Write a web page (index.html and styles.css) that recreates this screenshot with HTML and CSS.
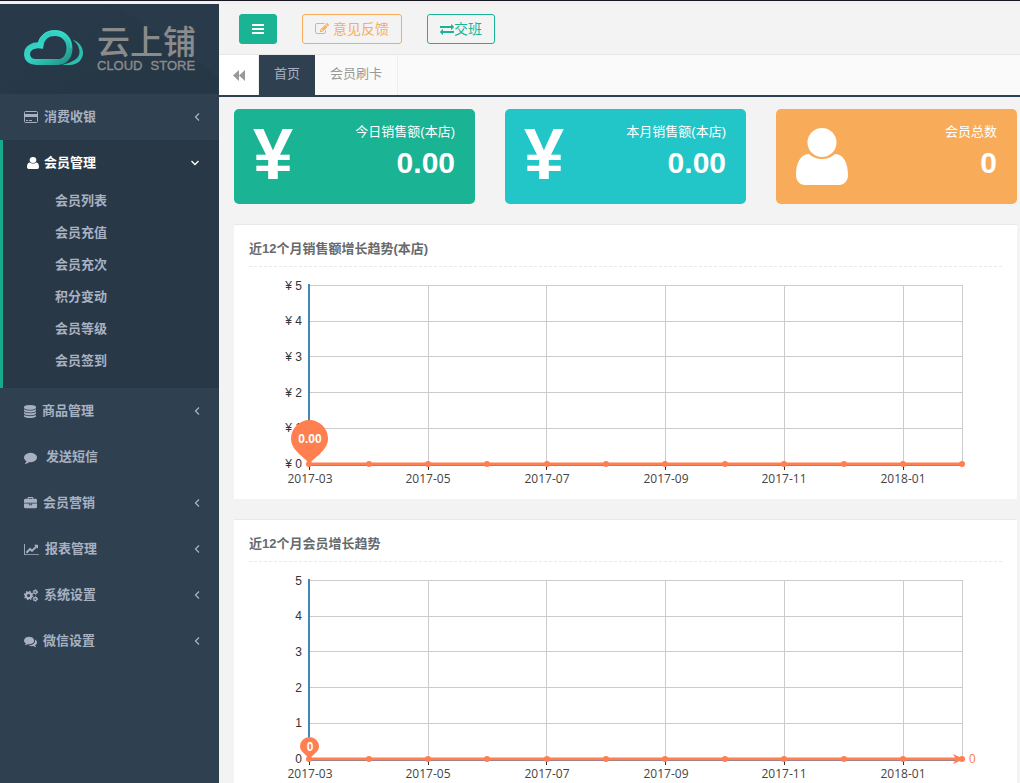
FILE: index.html
```html
<!DOCTYPE html>
<html lang="zh-CN">
<head>
<meta charset="utf-8">
<title>云上铺</title>
<link rel="stylesheet" href="styles.css">
</head>
<body>
<div class="app">
  <aside class="sidebar">
    <a class="brand" href="#">
      <svg class="brand-mark" width="60" height="36" viewBox="0 0 60 36" aria-hidden="true">
        <defs>
          <linearGradient id="cloud" x1="0" y1="0" x2="1" y2="1">
            <stop offset="0" stop-color="#2bc4b4"/><stop offset=".45" stop-color="#35d6c6"/><stop offset="1" stop-color="#1f9488"/>
          </linearGradient>
        </defs>
        <path d="M48 9.500C55 11.500 59 17 59 23C59 30 53 35 46 35H38C50 32 56 28 55.500 21C55 16 52 12 48 9.500Z" fill="#2abfb0"/>
        <path d="M12 32H34C42 32 45.500 25 45.500 18C45.500 9 39 3 31 3C23 3 17.500 8 16.500 15.500C9 14.500 3 18.500 3 24C3 29 7 32 12 32Z" fill="none" stroke="url(#cloud)" stroke-width="6"/>
        <path d="M14 15C15 6 22 1 30 1C41 1 47 9 47 18" fill="none" stroke="#3adccb" stroke-width="1"/>
      </svg>
      <span class="brand-name">
        <span class="brand-cn">云上铺</span>
        <span class="brand-en"><span>CLOUD</span><span>STORE</span></span>
      </span>
    </a>
    <nav>
      <ul class="menu">
        <li><a class="menu-link" href="#">
          <svg width="14" height="12" viewBox="0 0 14 12"><rect x=".5" y=".5" width="13" height="11" rx="1" fill="none" stroke="currentColor"/><path d="M1 3h12v3H1zM2 9h2v1H2zM5 9h3v1H5z"/></svg>
          <span>消费收银</span><svg class="arrow" width="6" height="8" viewBox="0 0 6 8"><path d="M5 .5L1.500 4L5 7.500"/></svg></a></li>
        <li class="open"><a class="menu-link" href="#">
          <svg width="12" height="12" viewBox="0 0 52 57" preserveAspectRatio="none"><circle cx="26" cy="14.500" r="14.500"/><path d="M13 26C16 29 21 31 26 31S36 29 39 26C48 26 52 36 52 47C52 53 48 57 43 57H9C4 57 0 53 0 47C0 36 4 26 13 26Z"/></svg>
          <span>会员管理</span><svg class="arrow" width="8" height="6" viewBox="0 0 8 6"><path d="M.5 1L4 4.500L7.500 1"/></svg></a>
          <ul class="submenu">
            <li><a href="#">会员列表</a></li>
            <li><a href="#">会员充值</a></li>
            <li><a href="#">会员充次</a></li>
            <li><a href="#">积分变动</a></li>
            <li><a href="#">会员等级</a></li>
            <li><a href="#">会员签到</a></li>
          </ul></li>
        <li><a class="menu-link" href="#">
          <svg width="12" height="13" viewBox="128 0 1536 1792" preserveAspectRatio="none"><path d="M896 768q237 0 443-43t325-127v170q0 69-103 128t-280 93.500-385 34.500-385-34.500-280-93.500-103-128v-170q119 84 325 127t443 43zm0 768q237 0 443-43t325-127v170q0 69-103 128t-280 93.500-385 34.500-385-34.500-280-93.500-103-128v-170q119 84 325 127t443 43zm0-384q237 0 443-43t325-127v170q0 69-103 128t-280 93.500-385 34.500-385-34.500-280-93.500-103-128v-170q119 84 325 127t443 43zm0-1152q208 0 385 34.500t280 93.500 103 128v128q0 69-103 128t-280 93.500-385 34.500-385-34.500-280-93.500-103-128v-128q0-69 103-128t280-93.500 385-34.500z"/></svg>
          <span>商品管理</span><svg class="arrow" width="6" height="8" viewBox="0 0 6 8"><path d="M5 .5L1.500 4L5 7.500"/></svg></a></li>
        <li><a class="menu-link wide" href="#">
          <svg width="13" height="13" viewBox="0 0 1792 1792"><path d="M1792 896q0 174-120 321.500t-326 233-450 85.500q-70 0-145-8-198 175-460 242-49 14-114 22-17 2-30.500-9t-17.500-29v-1q-3-4-.5-12t2-10 4.500-9.500l6-9 7-8.500 8-9q7-8 31-34.500t34.500-38 31-39.500 32.500-51 27-59 26-76q-157-89-247.500-220t-90.500-281q0-130 71-248.500t191-204.500 286-136.500 348-50.500q244 0 450 85.500t326 233 120 321.500z"/></svg>
          <span>发送短信</span></a></li>
        <li><a class="menu-link" href="#">
          <svg width="13" height="13" viewBox="0 0 1792 1792"><path d="M640 256h512v-128h-512v128zm1152 640v480q0 66-47 113t-113 47h-1472q-66 0-113-47t-47-113v-480h672v160q0 26 19 45t45 19h320q26 0 45-19t19-45v-160h672zm-768 0v128h-256v-128h256zm768-480v384h-1792v-384q0-66 47-113t113-47h352v-160q0-40 28-68t68-28h576q40 0 68 28t28 68v160h352q66 0 113 47t47 113z"/></svg>
          <span>会员营销</span><svg class="arrow" width="6" height="8" viewBox="0 0 6 8"><path d="M5 .5L1.500 4L5 7.500"/></svg></a></li>
        <li><a class="menu-link" href="#">
          <svg width="15" height="13" viewBox="0 0 2048 1792"><path d="M2048 1536v128h-2048v-1536h128v1408h1920zm-128-1248v435q0 21-19.500 29.500t-35.500-7.500l-121-121-633 633q-10 10-23 10t-23-10l-233-233-416 416-192-192 585-585q10-10 23-10t23 10l233 233 464-464-121-121q-16-16-7.500-35.500t29.500-19.500h435q14 0 23 9t9 23z"/></svg>
          <span>报表管理</span><svg class="arrow" width="6" height="8" viewBox="0 0 6 8"><path d="M5 .5L1.500 4L5 7.500"/></svg></a></li>
        <li><a class="menu-link" href="#">
          <svg width="14" height="13" viewBox="0 0 14 13"><g fill="none" stroke="currentColor"><circle cx="4.600" cy="6.500" r="2.700" stroke-width="2.200"/><circle cx="4.600" cy="6.500" r="4" stroke-width="1.400" stroke-dasharray="1.570 1.570"/><circle cx="11.300" cy="3" r="1.500" stroke-width="1.300"/><circle cx="11.300" cy="3" r="2.300" stroke-width="1" stroke-dasharray="1.200 1.200"/><circle cx="11.300" cy="10" r="1.500" stroke-width="1.300"/><circle cx="11.300" cy="10" r="2.300" stroke-width="1" stroke-dasharray="1.200 1.200"/></g></svg>
          <span>系统设置</span><svg class="arrow" width="6" height="8" viewBox="0 0 6 8"><path d="M5 .5L1.500 4L5 7.500"/></svg></a></li>
        <li><a class="menu-link" href="#">
          <svg width="13" height="13" viewBox="0 0 1792 1792"><path d="M1408 768q0 139-94 257t-256.500 186.500-353.500 68.500q-86 0-176-16-124 88-278 128-36 9-86 16h-3q-11 0-20.500-8t-11.500-21q-1-3-1-6.500t.5-6.500 2-6l2.500-5 3.500-5.500 4-5 4.500-5 4-4.500q5-6 23-25t26-29.500 22.500-29 25-38.500 20.500-44q-124-72-195-177t-71-224q0-139 94-257t256.500-186.500 353.500-68.500 353.500 68.500 256.500 186.500 94 257zm384 256q0 120-71 224.500t-195 176.500q10 24 20.500 44t25 38.500 22.500 29 26 29.500 23 25q1 1 4 4.500t4.500 5 4 5 3.500 5.500l2.500 5 2 6 .5 6.500-1 6.500q-3 14-13 22t-22 7q-50-7-86-16-154-40-278-128-90 16-176 16-271 0-472-132 58 4 88 4 161 0 309-45t264-129q125-92 192-212t67-254q0-77-23-152 129 71 204 178t75 230z"/></svg>
          <span>微信设置</span><svg class="arrow" width="6" height="8" viewBox="0 0 6 8"><path d="M5 .5L1.500 4L5 7.500"/></svg></a></li>
      </ul>
    </nav>
  </aside>

  <main class="main">
    <header class="topbar">
      <button class="btn btn-solid" type="button" aria-label="菜单"><svg width="12" height="12" viewBox="0 0 12 12"><path d="M0 1h12v2H0zM0 5h12v2H0zM0 9h12v2H0z"/></svg></button>
      <button class="btn btn-orange" type="button"><svg width="14" height="14" viewBox="0 0 1792 1792"><path d="M888 1184l116-116-152-152-116 116v56h96v96h56zm440-720q-16-16-33 1l-350 350q-17 17-1 33t33-1l350-350q17-17 1-33zm80 594v190q0 119-84.500 203.500t-203.500 84.500h-832q-119 0-203.500-84.500t-84.500-203.500v-832q0-119 84.500-203.500t203.500-84.500h832q63 0 117 25 15 7 18 23 3 17-9 29l-49 49q-14 14-32 8-23-6-45-6h-832q-66 0-113 47t-47 113v832q0 66 47 113t113 47h832q66 0 113-47t47-113v-126q0-13 9-22l64-64q15-15 35-7t20 29zm-96-738l288 288-672 672h-288v-288zm444 132l-92 92-288-288 92-92q28-28 68-28t68 28l152 152q28 28 28 68t-28 68z"/></svg>意见反馈</button>
      <button class="btn btn-green" type="button"><svg width="14" height="14" viewBox="0 0 1792 1792"><path d="M1792 1184v192q0 13-9.500 22.500t-22.500 9.500h-1376v192q0 13-9.500 22.500t-22.500 9.500q-12 0-24-10l-319-320q-9-9-9-22 0-14 9-23l320-320q9-9 23-9 13 0 22.500 9.500t9.500 22.500v192h1376q13 0 22.500 9.500t9.500 22.500zm0-544q0 14-9 23l-320 320q-9 9-23 9-13 0-22.500-9.500t-9.500-22.500v-192h-1376q-13 0-22.500-9.500t-9.500-22.500v-192q0-13 9.500-22.500t22.500-9.500h1376v-192q0-14 9-23t23-9q12 0 24 10l319 319q9 9 9 23z"/></svg>交班</button>
    </header>
    <div class="tabs">
      <button class="tab-back" type="button" aria-label="向左"><svg width="12" height="11" viewBox="0 0 12 11"><path d="M6 0v11L0 5.500zM12 0v11L6 5.500z"/></svg></button>
      <a class="tab active" href="#">首页</a>
      <a class="tab" href="#">会员刷卡</a>
    </div>

    <div class="content">
      <section class="cards">
        <div class="card green"><span class="yen" aria-hidden="true">¥</span><div class="stat"><span>今日销售额(本店)</span><strong>0.00</strong></div></div>
        <div class="card cyan"><span class="yen" aria-hidden="true">¥</span><div class="stat"><span>本月销售额(本店)</span><strong>0.00</strong></div></div>
        <div class="card orange">
          <svg class="person" width="52" height="57" viewBox="0 0 52 57" aria-hidden="true"><circle cx="26" cy="14.500" r="14.500"/><path d="M13 26C16 29 21 31 26 31S36 29 39 26C48 26 52 36 52 47C52 53 48 57 43 57H9C4 57 0 53 0 47C0 36 4 26 13 26Z"/></svg>
          <div class="stat"><span>会员总数</span><strong>0</strong></div></div>
      </section>

      <section class="panel">
        <h2>近12个月销售额增长趋势(本店)</h2>
        <svg class="chart" viewBox="0 0 753 232">
          <path class="grid" d="M60 18.500H714M60 54.500H714M60 89.500H714M60 125.500H714M60 161.500H714M179.500 18V197M297.500 18V197M416.500 18V197M535.500 18V197M654.500 18V197M713.500 18V197"/>
          <path class="axis" d="M60 17V199M59 198H714"/>
          <path class="tick" d="M60.500 199v4M179.500 199v4M297.500 199v4M416.500 199v4M535.500 199v4M654.500 199v4"/>
          <g class="ylab"><text x="53" y="23">¥ 5</text><text x="53" y="58">¥ 4</text><text x="53" y="94">¥ 3</text><text x="53" y="130">¥ 2</text><text x="53" y="165">¥ 1</text><text x="53" y="201">¥ 0</text></g>
          <g class="xlab"><text x="61" y="216">2017-03</text><text x="179" y="216">2017-05</text><text x="298" y="216">2017-07</text><text x="417" y="216">2017-09</text><text x="535" y="216">2017-11</text><text x="654" y="216">2018-01</text></g>
          <path class="series" d="M60 197H713"/>
          <g class="dots"><circle cx="60" cy="197" r="3"/><circle cx="120" cy="197" r="3"/><circle cx="179" cy="197" r="3"/><circle cx="238" cy="197" r="3"/><circle cx="298" cy="197" r="3"/><circle cx="357" cy="197" r="3"/><circle cx="416" cy="197" r="3"/><circle cx="476" cy="197" r="3"/><circle cx="535" cy="197" r="3"/><circle cx="595" cy="197" r="3"/><circle cx="654" cy="197" r="3"/><circle cx="713" cy="197" r="3"/>
          <path d="M60.500 197C57 191 42 184 42 171.500A18.500 18.500 0 0 1 79 171.500C79 184 64 191 60.500 197Z"/></g>
          <text class="pin" x="61" y="176">0.00</text>
        </svg>
      </section>

      <section class="panel">
        <h2>近12个月会员增长趋势</h2>
        <svg class="chart" viewBox="0 0 753 232">
          <path class="grid" d="M60 18.500H714M60 54.500H714M60 89.500H714M60 125.500H714M60 161.500H714M179.500 18V197M297.500 18V197M416.500 18V197M535.500 18V197M654.500 18V197M713.500 18V197"/>
          <path class="axis" d="M60 17V199M59 198H714"/>
          <path class="tick" d="M60.500 199v4M179.500 199v4M297.500 199v4M416.500 199v4M535.500 199v4M654.500 199v4"/>
          <g class="ylab"><text x="53" y="23">5</text><text x="53" y="58">4</text><text x="53" y="94">3</text><text x="53" y="130">2</text><text x="53" y="165">1</text><text x="53" y="201">0</text></g>
          <g class="xlab"><text x="61" y="216">2017-03</text><text x="179" y="216">2017-05</text><text x="298" y="216">2017-07</text><text x="417" y="216">2017-09</text><text x="535" y="216">2017-11</text><text x="654" y="216">2018-01</text></g>
          <path class="series" d="M60 197H713"/>
          <g class="dots"><circle cx="60" cy="197" r="3"/><circle cx="120" cy="197" r="3"/><circle cx="179" cy="197" r="3"/><circle cx="238" cy="197" r="3"/><circle cx="298" cy="197" r="3"/><circle cx="357" cy="197" r="3"/><circle cx="416" cy="197" r="3"/><circle cx="476" cy="197" r="3"/><circle cx="535" cy="197" r="3"/><circle cx="595" cy="197" r="3"/><circle cx="654" cy="197" r="3"/><circle cx="713" cy="197" r="3"/>
          <path d="M704 192L715 197L704 202L707 197Z"/>
          <path d="M60.500 197C58 193 51 190 51 184.500A9.500 9.500 0 0 1 70 184.500C70 190 63 193 60.500 197Z"/></g>
          <text class="pin" x="61" y="189">0</text>
          <text class="endlab" x="720" y="201">0</text>
        </svg>
      </section>
    </div>
  </main>
</div>
</body>
</html>
```

FILE: styles.css
```css
* { box-sizing: border-box; }
body {
  margin: 0;
  font: 13px/20px "Liberation Sans", "Noto Sans CJK SC", sans-serif;
  color: #676a6c;
  background: #f3f3f4;
}
a { color: inherit; text-decoration: none; }
ul { list-style: none; margin: 0; padding: 0; }
svg { fill: currentColor; flex: none; }
button { font: inherit; cursor: pointer; }

.app {
  display: flex;
  height: 100vh;
  overflow: hidden;
  border-top: 1px solid #17171f;
  padding-top: 3px;
  background: #f4eff2;
}

.sidebar { width: 219px; flex: none; background: #2f4050; color: #a7b1c2; font-weight: bold; }
.brand {
  display: flex;
  align-items: flex-start;
  gap: 13px;
  height: 90px;
  padding: 22px 20px 0 24px;
  background:
    linear-gradient(215deg, #293b4a 30%, transparent 30%),
    linear-gradient(150deg, #283a49 25%, #263746 60%);
}
.brand-mark { margin-top: 4px; }
.brand-name { display: flex; flex-direction: column; color: #8b8b8b; white-space: nowrap; }
.brand-cn { font-size: 33px; line-height: 34px; font-weight: 500; }
.brand-en { display: flex; gap: 8px; font-size: 13px; line-height: 12px; font-weight: normal; -webkit-text-stroke: 0.4px #8b8b8b; }

.menu-link { display: flex; align-items: center; gap: 6px; height: 46px; padding: 0 19px 0 24px; }
.menu-link.wide { gap: 9px; }
.arrow { margin-left: auto; fill: none; stroke: currentColor; stroke-width: 1.3; }
.open { background: #293846; border-left: 3px solid #19aa8d; padding-bottom: 10px; }
.open .menu-link { color: #fff; gap: 5px; padding-right: 20px; }
.submenu a { display: block; padding: 5px 0 7px 52px; }

.main { flex: 1; min-width: 0; display: flex; flex-direction: column; background: #f3f3f4; }
.topbar { display: flex; gap: 25px; padding: 10px 20px; border-bottom: 1px solid #e7e7e7; }
.btn {
  display: flex;
  align-items: center;
  gap: 4px;
  height: 30px;
  padding: 0 12px;
  border: 1px solid;
  border-radius: 3px;
  background: transparent;
  font-size: 14px;
}
.btn-solid { background: #1ab394; border-color: #1ab394; color: #fff; }
.btn-orange { color: #f8ac59; }
.btn-green { color: #1ab394; gap: 0; }

.tabs { display: flex; height: 42px; flex: none; background: #fafafa; border-bottom: 2px solid #2f4050; color: #999; }
.tab-back { width: 40px; padding: 0; border: 0; border-right: 1px solid #eee; background: #fff; color: #999; }
.tab-back svg { vertical-align: middle; }
.tab { padding: 0 15px; line-height: 38px; border-right: 1px solid #eee; }
.tab.active { background: #2f4050; border-right: 0; color: #a7b1c2; }

.content { flex: 1; min-height: 0; overflow-y: auto; scrollbar-width: none; padding: 12px 3px 20px 15px; }
.cards { display: grid; grid-template-columns: repeat(3, 1fr); gap: 30px; }
.card {
  display: flex;
  justify-content: space-between;
  height: 95px;
  padding: 13px 20px 13px 19px;
  border-radius: 5px;
  color: #fff;
}
.green { background: #1ab394; }
.cyan { background: #23c6c8; }
.orange { background: #f8ac59; padding-left: 20px; }
.yen { font-size: 72px; line-height: 65px; font-weight: bold; }
.person { margin-top: 6px; }
.stat { display: flex; flex-direction: column; text-align: right; }
.stat strong { font-size: 30px; line-height: 42px; }

.panel { margin-top: 20px; padding: 0 15px; background: #fff; border-top: 1px solid #e7eaec; }
.panel h2 { margin: 0; padding: 14px 0 7px; font-size: 13px; line-height: 20px; border-bottom: 1px dashed #e7eaec; }
.chart { display: block; width: 100%; font-size: 12px; }
.grid { stroke: #ccc; fill: none; }
.axis { stroke: #48b; stroke-width: 2; fill: none; }
.tick { stroke: #333; }
.ylab { fill: #333; text-anchor: end; }
.xlab { fill: #444; text-anchor: middle; font-family: "Open Sans", sans-serif; }
.series { stroke: #ff7f50; stroke-width: 3; }
.dots, .endlab { fill: #ff7f50; }
.pin { fill: #fff; font-weight: bold; text-anchor: middle; }
```
